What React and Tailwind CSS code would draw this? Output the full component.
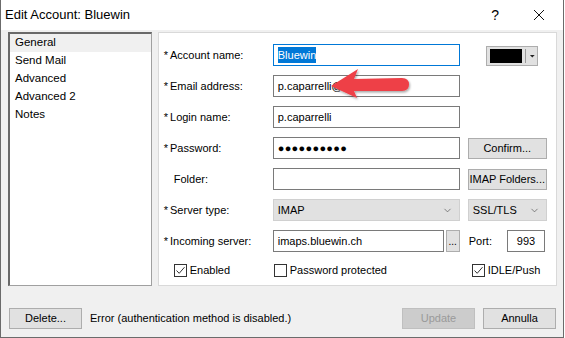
import { ChevronDown } from 'lucide-react';

const font = { fontFamily: '"Liberation Sans", Arial, sans-serif' };

function Field({ children, className = '' }) {
  return (
    <div className={`h-[22px] flex items-center border border-[#7a7a7a] bg-white px-[4px] text-[11px] text-black ${className}`}>
      {children}
    </div>
  );
}

function Button({ children, className = '', disabled = false }) {
  return (
    <div
      className={`h-[21px] flex items-center justify-center border text-[11px] ${
        disabled ? 'bg-[#cccccc] border-[#bfbfbf] text-[#9a9a9a]' : 'bg-[#e1e1e1] border-[#adadad] text-black'
      } ${className}`}
    >
      {children}
    </div>
  );
}

function Select({ value, className = '' }) {
  return (
    <div className={`h-[22px] flex items-center justify-between bg-[#e1e1e1] border border-[#d0d0d0] pl-[4px] pr-[6px] text-[11px] text-black ${className}`}>
      <span>{value}</span>
      <ChevronDown size={11} strokeWidth={1.5} className="text-[#555]" />
    </div>
  );
}

function Check({ checked, label, className = '' }) {
  return (
    <div className={`flex items-center gap-[3px] text-[11px] text-black ${className}`}>
      <div className="w-[13px] h-[13px] border border-[#333] bg-white flex items-center justify-center">
        {checked && (
          <svg width="11" height="11" viewBox="0 0 11 11">
            <path d="M1.5 5.5 L4.2 8.3 L9.5 2.2" fill="none" stroke="#333" strokeWidth="1" />
          </svg>
        )}
      </div>
      <span>{label}</span>
    </div>
  );
}

function Label({ children, star = true }) {
  return (
    <div className={`w-[109px] shrink-0 text-[11px] text-black ${star ? '' : 'pl-[10px]'}`}>
      {star && <span className="mr-[2px]">*</span>}
      {children}
    </div>
  );
}

export default function App() {
  const tabs = ['General', 'Send Mail', 'Advanced', 'Advanced 2', 'Notes'];

  return (
    <div className="w-[565px] h-[338px] bg-white relative overflow-hidden" style={font}>
      <div className="w-[564px] h-[338px] flex flex-col border-l border-r border-b border-[#6b6b6b]">
        {/* title bar */}
        <div className="h-[30px] flex items-center justify-between pl-[4px] pr-[18px] bg-white">
          <span className="text-[13px] text-black">Edit Account: Bluewin</span>
          <div className="flex items-center gap-[34px] text-black">
            <span className="text-[14px] leading-none">?</span>
            <svg width="12" height="12" viewBox="0 0 12 12">
              <path d="M1 1 L11 11 M11 1 L1 11" stroke="#111" strokeWidth="1" />
            </svg>
          </div>
        </div>

        <div className="flex-1 bg-[#f0f0f0] flex flex-col">
          <div className="flex gap-[6px] pl-[7px] pt-[2px] pr-[6px]">
            {/* list */}
            <div className="w-[144px] h-[254px] bg-white border border-[#a0a0a0] border-l-[2px] border-t-[2px] border-l-[#696969] border-t-[#696969]">
              {tabs.map((t, i) => (
                <div
                  key={t}
                  className={`h-[18px] flex items-center pl-[5px] text-[11.5px] text-black ${i === 0 ? 'bg-[#f0f0f0]' : ''}`}
                >
                  {t}
                </div>
              ))}
            </div>

            {/* settings panel */}
            <div className="w-[400px] h-[254px] bg-white border border-[#d9d9d9] pl-[5px] pt-[11px] flex flex-col gap-[9px]">
              <div className="flex items-center">
                <Label>Account name:</Label>
                <Field className="w-[187px] border-[#0078d7]">
                  <span className="bg-[#0078d7] text-white">Bluewin</span>
                </Field>
                <div className="ml-[26px] mt-[2px] h-[20px] w-[52px] flex items-center bg-[#e1e1e1] border border-[#adadad] pl-[3px]">
                  <div className="w-[34px] h-[14px] bg-black" />
                  <div className="ml-[3px] h-[14px] border-l border-[#9a9a9a]" />
                  <svg width="9" height="6" viewBox="0 0 9 6" className="ml-[2px]">
                    <path d="M2 2 L4.5 4.5 L7 2 Z" fill="#222" />
                  </svg>
                </div>
              </div>

              <div className="flex items-center">
                <Label>Email address:</Label>
                <Field className="w-[187px]">p.caparrelli@</Field>
              </div>

              <div className="flex items-center">
                <Label>Login name:</Label>
                <Field className="w-[187px]">p.caparrelli</Field>
              </div>

              <div className="flex items-center">
                <Label>Password:</Label>
                <Field className="w-[187px] tracking-[0.3px] text-[10.5px]">●●●●●●●●●●</Field>
                <Button className="ml-[8px] w-[79px]">Confirm...</Button>
              </div>

              <div className="flex items-center">
                <Label star={false}>Folder:</Label>
                <Field className="w-[187px]" />
                <Button className="ml-[8px] w-[79px]">IMAP Folders...</Button>
              </div>

              <div className="flex items-center">
                <Label>Server type:</Label>
                <Select value="IMAP" className="w-[187px]" />
                <Select value="SSL/TLS" className="ml-[8px] w-[79px]" />
              </div>

              <div className="flex items-center">
                <Label>Incoming server:</Label>
                <Field className="w-[171px]">imaps.bluewin.ch</Field>
                <div className="ml-[2px] w-[14px] h-[22px] bg-[#e1e1e1] border border-[#adadad] flex items-end justify-center pb-[4px] text-[10px] leading-none text-black">
                  ...
                </div>
                <span className="ml-[9px] text-[11px] text-black">Port:</span>
                <Field className="ml-[15px] w-[38px] justify-center items-start pt-[2px]">993</Field>
              </div>

              <div className="flex items-center mt-[1px]">
                <Check checked label="Enabled" className="ml-[10px] w-[100px]" />
                <Check label="Password protected" className="w-[198px]" />
                <Check checked label="IDLE/Push" />
              </div>
            </div>
          </div>

          {/* bottom bar */}
          <div className="flex items-center pl-[8px] pr-[7px] mt-[22px]">
            <Button className="w-[73px]">Delete...</Button>
            <span className="ml-[8px] text-[11px] text-black">Error (authentication method is disabled.)</span>
            <Button disabled className="ml-auto w-[73px]">Update</Button>
            <Button className="ml-[8px] w-[73px]">Annulla</Button>
          </div>
        </div>
      </div>

      {/* red annotation arrow */}
      <svg className="absolute left-[326px] top-[64px]" width="92" height="40" viewBox="0 0 92 40">
        <defs>
          <filter id="sh" x="-10%" y="-20%" width="130%" height="150%">
            <feDropShadow dx="1" dy="1.5" stdDeviation="1.2" floodColor="#000" floodOpacity="0.35" />
          </filter>
        </defs>
        <g filter="url(#sh)">
          <path d="M5 22 L32 5 L28 15 L76 14 Q83 14 83 20.5 Q83 27 76 27 L28 27 L31 34 Z" fill="#ee3f46" />
        </g>
      </svg>
    </div>
  );
}
